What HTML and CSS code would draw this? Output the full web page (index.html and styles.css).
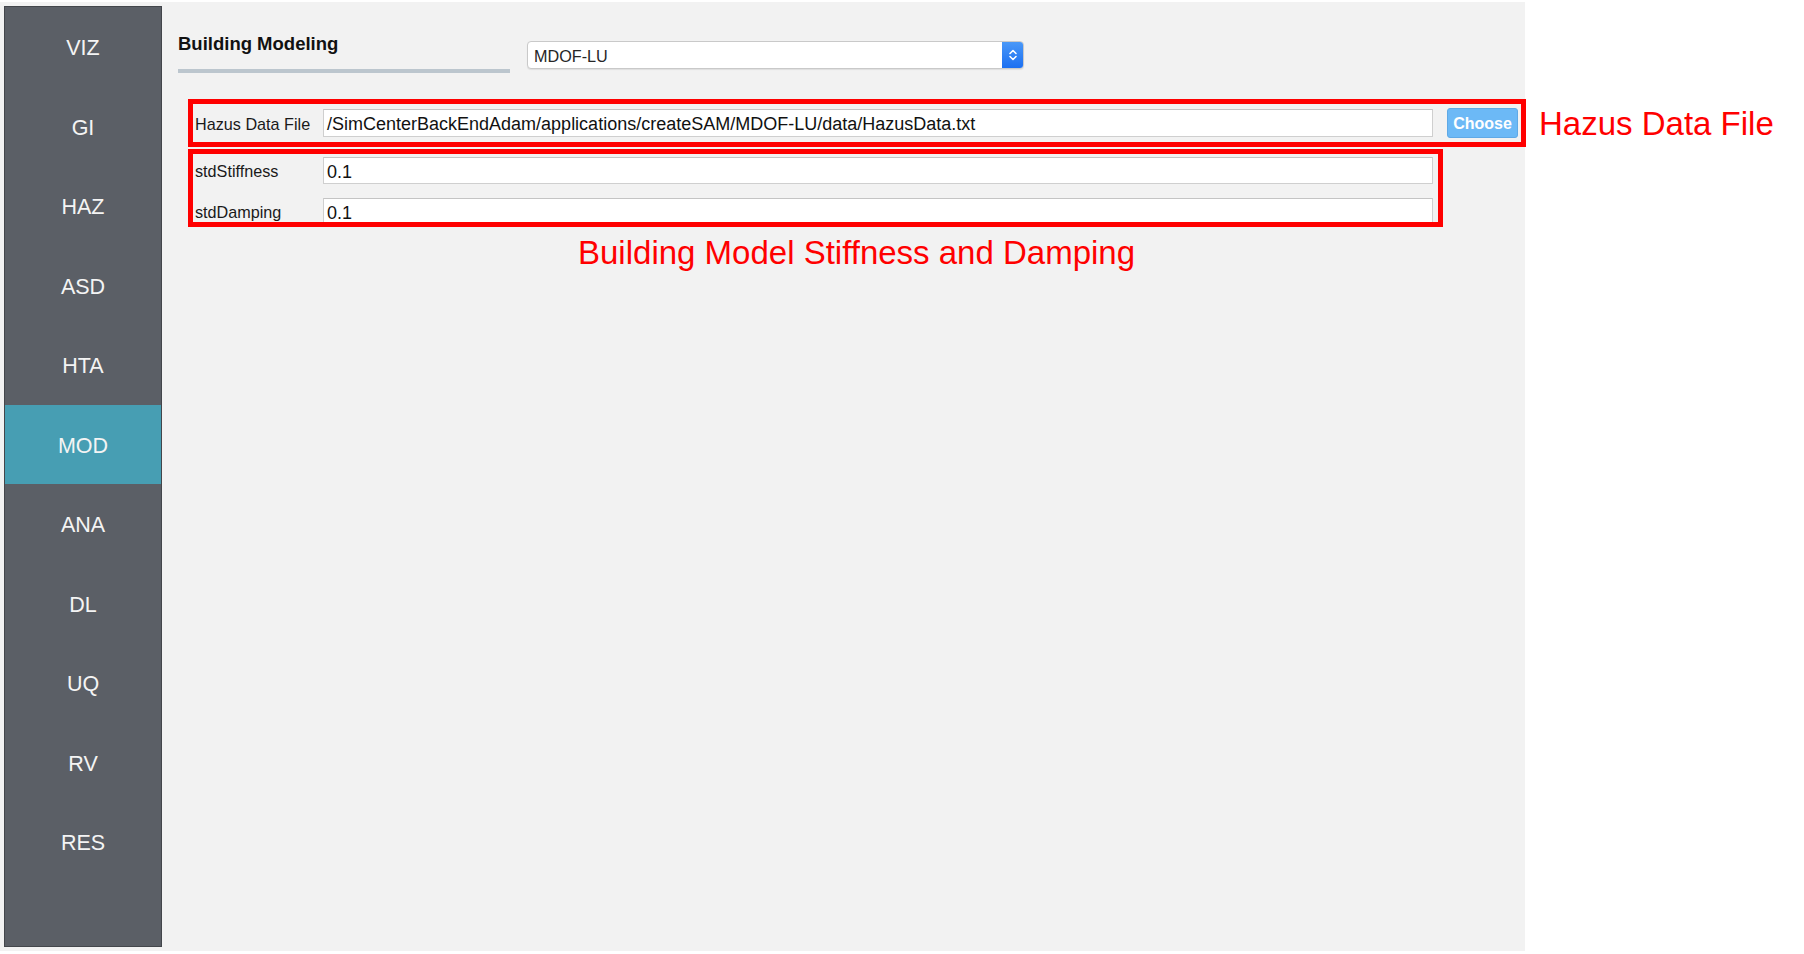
FILE: index.html
```html
<!DOCTYPE html>
<html lang="en">
<head>
<meta charset="utf-8">
<title>Building Modeling</title>
<link rel="stylesheet" href="styles.css">
</head>
<body>
<div class="app">
  <nav class="sidebar">
    <div class="nav-item">VIZ</div>
    <div class="nav-item">GI</div>
    <div class="nav-item">HAZ</div>
    <div class="nav-item">ASD</div>
    <div class="nav-item">HTA</div>
    <div class="nav-item active">MOD</div>
    <div class="nav-item">ANA</div>
    <div class="nav-item">DL</div>
    <div class="nav-item">UQ</div>
    <div class="nav-item">RV</div>
    <div class="nav-item">RES</div>
  </nav>
  <main class="content">
    <div class="header">
      <div class="title-block">
        <h1 class="title">Building Modeling</h1>
        <div class="title-rule"></div>
      </div>
      <div class="combo">
        <span class="combo-text">MDOF-LU</span>
        <span class="combo-arrows">
          <svg width="10" height="16" viewBox="0 0 10 16"><path d="M2 6.5 L5 3.5 L8 6.5" fill="none" stroke="#fff" stroke-width="1.6" stroke-linecap="round" stroke-linejoin="round"/><path d="M2 9.5 L5 12.5 L8 9.5" fill="none" stroke="#fff" stroke-width="1.6" stroke-linecap="round" stroke-linejoin="round"/></svg>
        </span>
      </div>
    </div>
    <div class="file-row">
      <div class="mark mark-file">
        <label class="field-label">Hazus Data File</label>
        <div class="field field-wide">/SimCenterBackEndAdam/applications/createSAM/MDOF-LU/data/HazusData.txt</div>
        <button class="choose">Choose</button>
      </div>
      <div class="note note-file">Hazus Data File</div>
    </div>
    <div class="mark mark-params">
      <div class="param-row">
        <label class="field-label">stdStiffness</label>
        <div class="field field-param">0.1</div>
      </div>
      <div class="param-row">
        <label class="field-label">stdDamping</label>
        <div class="field field-param">0.1</div>
      </div>
    </div>
    <div class="note note-params">Building Model Stiffness and Damping</div>
  </main>
</div>
</body>
</html>
```

FILE: styles.css
```css
html, body {
  margin: 0;
  padding: 0;
  background: #ffffff;
  font-family: "Liberation Sans", Arial, sans-serif;
}

.app {
  width: 1525px;
  height: 949px;
  margin-top: 2px;
  padding-left: 4px;
  box-sizing: border-box;
  background: #f2f2f2;
  display: flex;
  align-items: flex-start;
}

.sidebar {
  margin-top: 4px;
  width: 158px;
  height: 941px;
  box-sizing: border-box;
  border: 1px solid #43464b;
  background: #5b5f66;
  display: flex;
  flex-direction: column;
  flex-shrink: 0;
}

.nav-item {
  height: 79.5px;
  box-sizing: border-box;
  padding-top: 4px;
  display: flex;
  align-items: center;
  justify-content: center;
  color: #f4f4f4;
  font-size: 21.5px;
  flex-shrink: 0;
}

.nav-item.active {
  background: #479eb3;
}

.content {
  padding-left: 16px;
  padding-top: 31px;
  display: flex;
  flex-direction: column;
  align-items: flex-start;
}

.header {
  display: flex;
  align-items: flex-start;
}

.title-block {
  width: 332px;
}

.title {
  margin: 0;
  font-size: 18.5px;
  line-height: 22px;
  font-weight: bold;
  color: #111111;
}

.title-rule {
  margin-top: 14px;
  height: 4px;
  background: #bcc6ce;
}

.combo {
  margin-left: 17px;
  margin-top: 8px;
  width: 497px;
  height: 28px;
  box-sizing: border-box;
  border: 1px solid #c9c9c9;
  border-radius: 4px;
  background: #ffffff;
  display: flex;
  align-items: center;
  overflow: hidden;
  box-shadow: 0 1px 1px rgba(0,0,0,0.08);
}

.combo-text {
  flex: 1;
  padding-left: 6px;
  padding-top: 2px;
  font-size: 16.2px;
  color: #262626;
}

.combo-arrows {
  width: 21px;
  height: 100%;
  background: linear-gradient(#4a98f8, #1b6ff1);
  display: flex;
  align-items: center;
  justify-content: center;
}

.combo-arrows svg {
  display: block;
}

.file-row {
  margin-top: 26px;
  margin-left: 10px;
  display: flex;
  align-items: center;
}

.mark {
  border: 5px solid #ff0000;
  box-sizing: border-box;
}

.mark-file {
  width: 1338px;
  height: 48px;
  padding-left: 2px;
  padding-right: 3px;
  display: flex;
  align-items: center;
}

.field-label {
  width: 128px;
  flex-shrink: 0;
  padding-top: 2px;
  font-size: 16.2px;
  color: #1a1a1a;
}

.field {
  height: 28px;
  box-sizing: border-box;
  border: 1px solid #cfcfcf;
  border-top-color: #c4c4c4;
  background: #ffffff;
  padding-left: 3px;
  padding-top: 2px;
  font-size: 18px;
  line-height: 25px;
  color: #111111;
  white-space: nowrap;
  overflow: hidden;
}

.field-wide {
  width: 1110px;
}

.choose {
  margin-left: 14px;
  width: 71px;
  height: 30px;
  box-sizing: border-box;
  border: 1px solid #5fa9e6;
  border-radius: 3px;
  background: #6cb9f6;
  color: #ffffff;
  font-family: "Liberation Sans", Arial, sans-serif;
  font-weight: bold;
  font-size: 16px;
  padding: 2px 0 0 0;
}

.note {
  color: #ff0000;
  font-size: 33px;
  white-space: nowrap;
}

.note-file {
  margin-left: 13px;
  margin-top: 2px;
  font-size: 33px;
}

.mark-params {
  margin-top: 2px;
  margin-left: 10px;
  width: 1255px;
  height: 78px;
  padding: 3px 5px 0 2px;
  overflow: hidden;
  display: flex;
  flex-direction: column;
  gap: 14px;
}

.param-row {
  display: flex;
  align-items: center;
  flex-shrink: 0;
}

.field-param {
  width: 1110px;
  height: 27px;
  line-height: 24px;
}

.note-params {
  margin-top: 7px;
  margin-left: 400px;
}
```
